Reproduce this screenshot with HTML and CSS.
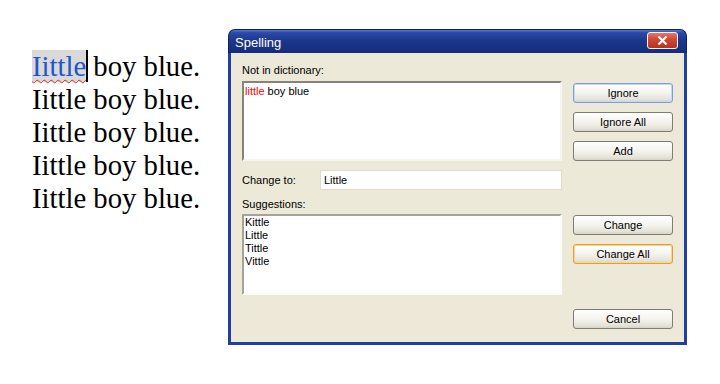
FILE: index.html
```html
<!DOCTYPE html>
<html lang="en">

<head>
    <meta charset="UTF-8">
    <meta name="viewport" content="width=device-width, initial-scale=1.0">
    <title>Spelling</title>

    <link rel="stylesheet" href="styles.css">
</head>

<body>

    <div class="page">
        <div class="doc">
            <div class="line"><span class="misspelled">Iittle</span> boy blue.</div>
            <div class="line">Iittle boy blue.</div>
            <div class="line">Iittle boy blue.</div>
            <div class="line">Iittle boy blue.</div>
            <div class="line">Iittle boy blue.</div>
        </div>

        <div class="dialog">
            <div class="titlebar">
                <span class="title">Spelling</span>
                <span class="close">
                    <svg width="11" height="9" viewBox="0 0 11 9">
                        <path d="M1.5 0.5 L9.5 8.5 M9.5 0.5 L1.5 8.5" stroke="#fff" stroke-width="2.2" fill="none" />
                    </svg>
                </span>
            </div>

            <div class="client">
                <div class="left-col">
                    <div class="label">Not in dictionary:</div>
                    <div class="box sentence"><span class="bad-word">little</span> boy blue</div>

                    <div class="change-row">
                        <span class="change-label">Change to:</span>
                        <div class="change-input">Little</div>
                    </div>

                    <div class="label suggest-label">Suggestions:</div>
                    <div class="box suggestions">
                        <div class="item">Kittle</div>
                        <div class="item">Little</div>
                        <div class="item">Tittle</div>
                        <div class="item">Vittle</div>
                    </div>
                </div>

                <div class="right-col">
                    <button class="btn btn-focus">Ignore</button>
                    <button class="btn">Ignore All</button>
                    <button class="btn">Add</button>
                    <button class="btn btn-change">Change</button>
                    <button class="btn btn-hover">Change All</button>
                    <button class="btn btn-cancel">Cancel</button>
                </div>
            </div>
        </div>
    </div>

</body>

</html>
```

FILE: styles.css
```css
body {
    margin: 0;
    padding: 0;
    background-color: #fff;
    font-family: "Liberation Sans", Arial, sans-serif;
}

.page {
    display: flex;
    align-items: flex-start;
}

/* Document text on the left */
.doc {
    width: 196px;
    padding: 50px 0 0 32px;
    font-family: "Liberation Serif", "Times New Roman", serif;
    font-size: 28.7px;
    line-height: 33px;
    color: #000;
    white-space: nowrap;
}

.misspelled {
    color: #2255cc;
    background-color: #d9d9d9;
    border-right: 2px solid #000;
    margin-right: -2px;
    text-decoration: underline wavy #e02020;
    text-decoration-thickness: 1px;
    text-underline-offset: 3px;
}

/* The dialog window */
.dialog {
    margin-top: 29px;
    width: 459px;
    height: 316px;
    display: flex;
    flex-direction: column;
}

.titlebar {
    height: 24px;
    border-radius: 7px 7px 0 0;
    background: linear-gradient(#5576d2 0, #2a4aa8 12%, #1d378a 45%, #152c7c 100%);
    border: 1px solid #0c2268;
    border-bottom: none;
    box-sizing: border-box;
    display: flex;
    align-items: flex-start;
    justify-content: space-between;
    padding: 0 8px 0 6px;
}

.title {
    color: #fff;
    font-size: 13px;
    line-height: 13px;
    margin-top: 6px;
}

.close {
    margin-top: 2px;
    width: 31px;
    height: 17px;
    box-sizing: border-box;
    border: 1px solid #f4f4f4;
    border-radius: 3px;
    background: linear-gradient(#e27a6b 0, #d14a36 40%, #b8301f 100%);
    display: flex;
    align-items: center;
    justify-content: center;
}

.client {
    flex: 1;
    background-color: #ece9d8;
    border: 3px solid #1f40a0;
    border-top: none;
    display: flex;
    gap: 11px;
    padding-left: 11px;
    font-size: 11px;
    color: #000;
}

.left-col {
    width: 320px;
    padding-top: 11px;
    display: flex;
    flex-direction: column;
}

.label {
    line-height: 13px;
    height: 13px;
}

.box {
    box-sizing: border-box;
    background-color: #fff;
    border: 2px solid;
    border-color: #85837a #f5f4ef #f5f4ef #85837a;
    line-height: 13px;
}

.sentence {
    margin-top: 4px;
    height: 80px;
    padding: 2px 1px;
}

.bad-word {
    color: #ff0000;
}

.change-row {
    margin-top: 9px;
    display: flex;
    align-items: center;
}

.change-label {
    width: 78px;
}

.change-input {
    flex: 1;
    height: 20px;
    box-sizing: border-box;
    background-color: #fff;
    border: 1px solid #dedbcb;
    padding: 3px 3px;
    line-height: 13px;
}

.suggest-label {
    margin-top: 8px;
}

.suggestions {
    margin-top: 3px;
    height: 81px;
    padding: 0 1px;
    border-color: #a4a29a #fbfbf8 #fbfbf8 #a4a29a;
}

.right-col {
    width: 100px;
    padding-top: 30px;
    display: flex;
    flex-direction: column;
}

.btn {
    height: 20px;
    width: 100px;
    margin-bottom: 9px;
    padding: 0;
    font-family: "Liberation Sans", Arial, sans-serif;
    font-size: 11px;
    color: #000;
    border: 1px solid #7d7c77;
    border-radius: 3px;
    background: linear-gradient(#ffffff 0, #f4f3ee 50%, #e6e3d8 85%, #d6d2c6 100%);
}

.btn-focus {
    border-color: #7f9ed6;
    box-shadow: inset 0 0 0 1px #c5d8f7;
}

.btn-change {
    margin-top: 45px;
}

.btn-hover {
    border-color: #e59d2e;
    box-shadow: inset 0 0 0 1px #fbd58a;
}

.btn-cancel {
    margin-top: 36px;
}
```
